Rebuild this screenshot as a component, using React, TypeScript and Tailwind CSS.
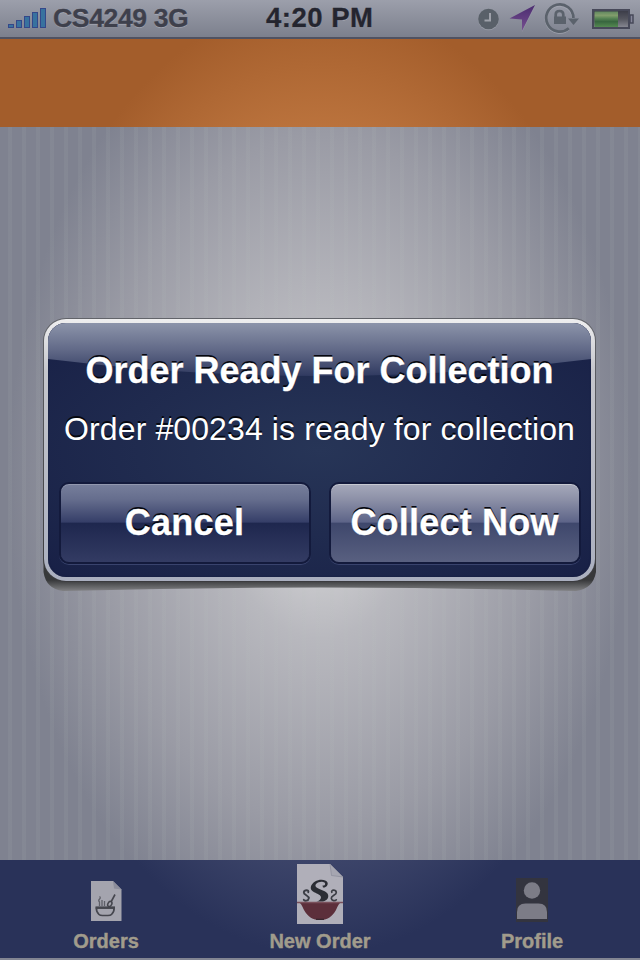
import React from "react";

function StatusBar() {
  return (
    <header className="relative flex h-[39px] shrink-0 items-start border-b-2 border-[#505261] bg-linear-to-b from-[#9c9fab] to-[#7c808d] font-bold [text-shadow:0_1px_0_rgba(190,192,202,0.5)]">
      <svg className="ml-[8px] mt-[8px] shrink-0" width="39" height="21" viewBox="0 0 39 21">
        {[4, 8, 12, 16, 20].map((h, i) => (
          <rect key={h} x={i * 8 + 0.5} y={20 - h + 0.5} width="5" height={h - 1} fill="#38729f" stroke="#34488a" />
        ))}
      </svg>
      <span className="ml-[6px] mt-[1px] w-[140px] whitespace-nowrap text-[26.6px] leading-[34px] tracking-[-0.4px] text-[#3e404c] [-webkit-text-stroke:0.3px_#3e404c]">CS4249 3G</span>
      <span className="ml-[73px] mt-[1px] w-[120px] whitespace-nowrap text-[27.5px] leading-[34px] tracking-[0.5px] text-[#24252f] [-webkit-text-stroke:0.3px_#24252f]">4:20 PM</span>
      <svg className="absolute right-0 top-0" width="180" height="37" viewBox="460 0 180 37">
        <defs>
          <linearGradient id="arrow" x1="0" y1="0" x2="0" y2="1">
            <stop offset="0" stopColor="#4b2c70" />
            <stop offset="1" stopColor="#775090" />
          </linearGradient>
          <linearGradient id="charge" x1="0" y1="0" x2="0" y2="1">
            <stop offset="0" stopColor="#60875f" />
            <stop offset="0.25" stopColor="#829e6c" />
            <stop offset="0.45" stopColor="#568354" />
            <stop offset="0.65" stopColor="#38663f" />
            <stop offset="1" stopColor="#548951" />
          </linearGradient>
          <linearGradient id="empty" x1="0" y1="0" x2="0" y2="1">
            <stop offset="0" stopColor="#393a46" />
            <stop offset="0.5" stopColor="#55565f" />
            <stop offset="1" stopColor="#8b8c96" />
          </linearGradient>
        </defs>
        <circle cx="488.500" cy="20" r="10.300" fill="#aaadb5" opacity="0.5" />
        <circle cx="488.500" cy="19" r="10.300" fill="#596069" />
        <path d="M490 13V20.500H484.500" fill="none" stroke="#9ea1aa" strokeWidth="2" />
        <path d="M535 6L522 32V19H509.500Z" fill="#a9abb5" opacity="0.6" />
        <path d="M535 5L522 31V19.500L509.500 18.500Z" fill="url(#arrow)" />
        <g fill="none" stroke="#a9abb5" strokeOpacity="0.6" strokeWidth="2.500">
          <path d="M573.200 19A13.600 13.600 0 1 0 568.800 29.200" />
        </g>
        <g fill="none" stroke="#5b626c" strokeWidth="2.700">
          <path d="M573.400 18A13.600 13.600 0 1 0 568.800 28.200" />
          <path d="M555.700 17V14.500Q555.700 11 559.500 11T563.300 14.500V17" />
        </g>
        <path d="M554 16.500H566V24H554ZM568 18.500H579L573.500 25Z" fill="#5b626c" />
        <rect x="593" y="10" width="36" height="18" fill="url(#empty)" stroke="#474959" strokeWidth="2" />
        <rect x="594.500" y="11.500" width="23.500" height="15.500" fill="url(#charge)" />
        <path d="M630 15H633V23H630Z" fill="#85869a" stroke="#474959" strokeWidth="1.500" />
      </svg>
    </header>
  );
}

function AlertButton({ label, primary }: { label: string; primary?: boolean }) {
  return (
    <button
      className={
        "h-[82px] w-[252px] rounded-[10px] border-2 border-[#131a3c] text-[36px] font-bold leading-none text-white [text-shadow:0_-2px_0_#05070f] " +
        (primary
          ? "bg-linear-[180deg,#a6a9bb_0%,#8c90a7_20%,#5d6488_49%,#3e476c_50%,#596080_100%] shadow-[inset_0_1px_0_#c7c9d2,0_1px_0_#39436d]"
          : "bg-linear-[180deg,#777f9c_0%,#656d8d_20%,#353e68_49%,#1e274e_50%,#333b63_100%] shadow-[inset_0_1px_0_#9298af,0_1px_0_#39436d]")
      }
    >
      <span className="tracking-[0.2px] [-webkit-text-stroke:0.3px_white]">{label}</span>
    </button>
  );
}

function Alert() {
  return (
    <div className="absolute left-[43px] top-[318px] h-[276px] w-[554px]">
      <svg className="absolute inset-0" width="554" height="276" viewBox="0 0 554 276">
        <defs>
          <linearGradient id="shadow" gradientUnits="userSpaceOnUse" x1="0" y1="262" x2="0" y2="274">
            <stop offset="0" stopColor="#37383a" />
            <stop offset="0.45" stopColor="#5b5c5e" />
            <stop offset="1" stopColor="#88888b" />
          </linearGradient>
        </defs>
        <path d="M0.500 235V254Q3 271 20 273Q277 266 533 273Q550 271 553 254V235Z" fill="url(#shadow)" />
      </svg>
      <section className="relative h-[264px] w-[553px] rounded-[23px] bg-linear-to-b from-[#62646a] to-[#3b3b3e] p-px">
        <div className="h-full rounded-[22px] bg-linear-[180deg,#eeeeef_0%,#c5c6cc_20%,#aaafbf_100%] p-[4px]">
          <div className="relative flex h-full flex-col items-center overflow-hidden rounded-[18px] bg-radial-[ellipse_at_center] from-[#273557] to-[#182046] shadow-[inset_0_0_2px_#141b3d]">
            <svg className="absolute inset-0" width="543" height="60" viewBox="0 0 543 60">
              <defs>
                <linearGradient id="gloss" x1="0" y1="0" x2="0" y2="1">
                  <stop offset="0" stopColor="#8c94aa" />
                  <stop offset="0.5" stopColor="#626a88" />
                  <stop offset="1" stopColor="#303a60" />
                </linearGradient>
              </defs>
              <path d="M0 0H543V36Q272 70 0 36Z" fill="url(#gloss)" />
            </svg>
            <h1 className="relative mt-[26px] whitespace-nowrap text-[36px] font-bold leading-[44px] text-white [-webkit-text-stroke:0.3px_white] [text-shadow:0_-2px_0_#05070f]">Order Ready For Collection</h1>
            <p className="relative mt-[16px] whitespace-nowrap text-[32px] leading-[40px] tracking-[0.11px] text-white [text-shadow:0_-2px_0_#05070f]">Order #00234 is ready for collection</p>
            <div className="mt-[33px] flex gap-[18px]">
              <AlertButton label="Cancel" />
              <AlertButton label="Collect Now" primary />
            </div>
          </div>
        </div>
      </section>
    </div>
  );
}

function OrdersIcon() {
  return (
    <svg width="32" height="42" viewBox="0 0 32 42">
      <path d="M1 1H23L31.500 9.500V41H1Z" fill="#a4a4ae" />
      <path d="M23 1L24 8.500L31.500 9.500Z" fill="#8c8d9b" />
      <g fill="none" stroke="#45464e">
        <path d="M6.500 28H24C24.500 31 22.500 33.500 21.500 34.500Q20.500 35.500 18 35.500H12.500Q10 35.500 9 34.500C8 33.500 6 31 6.500 28Z" strokeWidth="1.700" />
        <path d="M5.500 27.600H25" strokeWidth="2.400" />
        <path d="M25 14.500L21 22" strokeWidth="1.600" />
        <ellipse cx="19.800" cy="24" rx="1.900" ry="2.700" strokeWidth="1.500" transform="rotate(30 19.800 24)" />
        <path d="M9.500 26V22Q8 20.500 9.500 19T9.500 16.500M12 26V20M14.500 26V21" stroke="#5e5f68" strokeWidth="1.300" />
      </g>
    </svg>
  );
}

function NewOrderIcon() {
  return (
    <svg width="48" height="62" viewBox="0 0 48 62">
      <path d="M1 1H34L47 14V61H1Z" fill="#b0afb9" />
      <path d="M34 1L35.500 12.500L47 14Z" fill="#a6a6b1" stroke="#898b99" strokeWidth=".7" />
      <path
        d="M27 24.500C30 25 32.500 22 31.500 19.500C30 16 23 16 19 18.500C14 22 13.500 26 17 28.500C20 30.500 24.500 31.500 25 34C25 36.500 23 38 20.500 38.500H27C31.500 37.500 33.500 34 31.500 30.500C29.500 27.500 22 26 20 24C18 21.500 22 18.500 26 18.800C29 19 30 21 28.500 22.200C28 22.600 27 22.500 26.500 22.500Z"
        fill="#2b2d34"
      />
      <g fill="none" stroke="#3b3d45" strokeLinecap="round">
        <path d="M12.300 29.300C13.300 26.500 8.300 26.500 7.800 29.300C7.400 32 13.300 32.500 12.800 35.300C12.300 38 9 38.200 7.800 36.800" strokeWidth="1.900" />
        <path d="M35.800 29.300C34.800 26.500 39.800 26.500 40.300 29.300C40.700 32 34.800 32.500 35.300 35.300C35.800 38 39.100 38.200 40.300 36.800" strokeWidth="1.700" />
      </g>
      <path d="M1 39H47C43 39 42 43 40 47C36 54 31 57 24 57S12 54 8 47C6 43 5 39 1 39Z" fill="#5c2f3b" />
      <path d="M1 39.500H47" stroke="#7a505b" strokeWidth="1.500" />
      <path d="M20 56.300H28" stroke="#34242c" strokeWidth="1.200" />
    </svg>
  );
}

function ProfileIcon() {
  return (
    <svg width="32" height="44" viewBox="0 0 32 44">
      <rect width="32" height="44" fill="#33343f" />
      <circle cx="16" cy="12.500" r="8.200" fill="#7c7c87" />
      <path d="M1 41V34Q1 25.500 9.500 25.500H22.500Q31 25.500 31 34V41Z" fill="#7c7c87" />
    </svg>
  );
}

function Tab({ icon, label }: { icon: React.ReactNode; label: string }) {
  return (
    <div className="flex w-[212px] flex-col items-center">
      <div className="flex h-[69px] items-end justify-center">{icon}</div>
      <span className="whitespace-nowrap text-[20px] font-bold leading-[24px] text-[#a19c8c] [-webkit-text-stroke:0.4px_#a19c8c]">{label}</span>
    </div>
  );
}

export default function App() {
  return (
    <main className="relative flex h-[960px] w-[640px] flex-col overflow-hidden bg-[#828592] font-['Liberation_Sans',Arial,sans-serif]">
      <StatusBar />
      <div className="h-[88px] shrink-0 bg-[radial-gradient(312px_480px_at_320px_441px,#bb733d_0%,#bb733d_73%,#a35d2b_100%)]" />
      <div className="h-[733px] shrink-0 bg-[repeating-linear-gradient(90deg,transparent_0px,transparent_8px,rgba(185,195,190,0.09)_8px,rgba(185,195,190,0.09)_12px,transparent_12px,transparent_14px),radial-gradient(312px_480px_at_320px_353px,#d5d5d8_0%,#c5c5c9_23%,#b8b8be_33%,#9a9ba5_72%,#7f8290_100%)]" />
      <nav className="flex h-[98px] shrink-0 justify-center bg-[radial-gradient(312px_480px_at_320px_-380px,#3d456a_0%,#3d456a_78%,#293259_99%)]">
        <div className="-ml-[2px] mr-[2px] flex"><Tab icon={<div className="pb-[7px]"><OrdersIcon /></div>} label="Orders" /></div>
        <Tab icon={<div className="pb-[4px]"><NewOrderIcon /></div>} label="New Order" />
        <Tab icon={<div className="pb-[7px]"><ProfileIcon /></div>} label="Profile" />
      </nav>
      <Alert />
    </main>
  );
}
